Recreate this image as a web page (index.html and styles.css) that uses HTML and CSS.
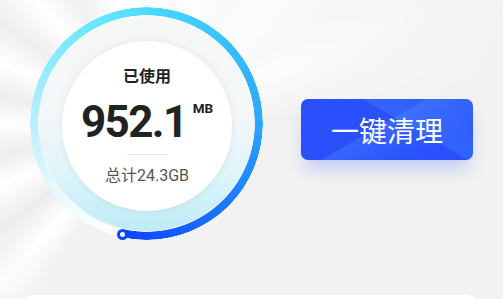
FILE: index.html
```html
<!DOCTYPE html>
<html lang="zh">
<head>
<meta charset="utf-8">
<link rel="stylesheet" href="styles.css">
</head>
<body>
<div class="page">
  <div class="rays"></div>
  <div class="top">
    <div class="gauge">
      <div class="ring"></div>
      <div class="glow"></div>
      <div class="face">
        <div class="label">已使用</div>
        <div class="value"><span class="num">952.1</span><span class="unit">MB</span></div>
        <div class="divider"></div>
        <div class="total">总计24.3GB</div>
      </div>
      <div class="dot"></div>
    </div>
    <button class="clean">一键清理</button>
  </div>
  <div class="card"></div>
</div>
</body>
</html>
```
FILE: styles.css
```css
html, body {
  margin: 0;
  padding: 0;
}
body {
  width: 503px;
  height: 299px;
  overflow: hidden;
  font-family: Roboto, "Noto Sans CJK SC", sans-serif;
}
.page {
  position: relative;
  width: 503px;
  height: 299px;
  background: #f2f2f2;
  overflow: hidden;
}
.rays {
  position: absolute;
  left: -354px;
  top: -376px;
  width: 1000px;
  height: 1000px;
  background: conic-gradient(from 0deg,
    rgba(255,255,255,0.85) 0deg, rgba(255,255,255,0.6) 12deg,
    rgba(255,255,255,0.85) 22deg, rgba(255,255,255,0.55) 34deg,
    rgba(255,255,255,0.8) 46deg, rgba(255,255,255,0.5) 58deg,
    rgba(255,255,255,0.75) 68deg, rgba(255,255,255,0.3) 80deg,
    rgba(255,255,255,0.0) 88deg,
    rgba(255,255,255,0.0) 212deg,
    rgba(255,255,255,0.95) 222deg, rgba(232,232,232,0.5) 234deg,
    rgba(255,255,255,0.95) 247deg, rgba(232,232,232,0.5) 258deg,
    rgba(255,255,255,0.95) 270deg, rgba(232,232,232,0.5) 281deg,
    rgba(255,255,255,0.95) 293deg, rgba(235,235,235,0.5) 305deg,
    rgba(255,255,255,0.95) 318deg, rgba(240,240,240,0.5) 331deg,
    rgba(255,255,255,0.9) 346deg, rgba(255,255,255,0.85) 360deg);
  -webkit-mask: radial-gradient(circle at 50% 50%, #000 0, #000 150px, transparent 400px);
  mask: radial-gradient(circle at 50% 50%, #000 0, #000 150px, transparent 400px);
}
.top {
  position: relative;
  display: flex;
  align-items: flex-start;
  padding: 7px 0 0 30px;
}
.gauge {
  position: relative;
  width: 233px;
  height: 233px;
  flex: none;
}
.ring {
  position: absolute;
  inset: 0;
  border-radius: 50%;
  background: conic-gradient(from 192deg,
    #ffffff 0deg, #e8faff 40deg, #b8f0ff 78deg, #5ee4ff 150deg,
    #46d6ff 175deg, #2aa6ff 258deg, #1768ff 320deg, #0a44ff 360deg);
  -webkit-mask: radial-gradient(circle, transparent 108px, #000 108.6px, #000 116px, transparent 116.6px);
  mask: radial-gradient(circle, transparent 108px, #000 108.6px, #000 116px, transparent 116.6px);
}
.glow {
  position: absolute;
  inset: 9px;
  border-radius: 50%;
  background: linear-gradient(180deg, #f6f7f7 0%, #f4f7f8 45%, #e0f5fa 72%, #bdecf7 100%);
}
.face {
  position: absolute;
  left: 32px;
  top: 34px;
  width: 170px;
  height: 170px;
  border-radius: 50%;
  background: #fff;
  box-shadow: 0 0 8px rgba(0,0,0,0.07);
  display: flex;
  flex-direction: column;
  align-items: center;
}
.label {
  margin-top: 26px;
  font-size: 16px;
  font-weight: 700;
  line-height: 20px;
  color: #222;
}
.value {
  display: flex;
  align-items: flex-start;
  margin-top: 15px;
  color: #222;
}
.num {
  font-size: 44px;
  font-weight: 700;
  line-height: 40px;
  letter-spacing: -1.6px;
}
.unit {
  font-size: 13.5px;
  font-weight: 700;
  line-height: 12px;
  margin-left: 6px;
  margin-top: 0;
}
.divider {
  width: 41px;
  height: 1px;
  background: #e6e6e6;
  margin-top: 12px;
}
.total {
  margin-top: 11px;
  font-size: 16px;
  line-height: 20px;
  color: #555;
}
.dot {
  position: absolute;
  left: 87px;
  top: 222px;
  width: 5px;
  height: 5px;
  border-radius: 50%;
  background: #fff;
  border: 3px solid #0a46ff;
}
.clean {
  margin: 92px 0 0 38px;
  width: 172px;
  height: 61px;
  border: none;
  border-radius: 7px;
  background:
    linear-gradient(150deg, rgba(255,255,255,0) 0%, rgba(255,255,255,0) 45%, rgba(80,140,255,0.35) 45.5%, rgba(80,140,255,0) 80%),
    linear-gradient(30deg, rgba(255,255,255,0) 60%, rgba(60,120,255,0.5) 60.5%, rgba(60,120,255,0.2) 100%),
    #2950fb;
  box-shadow: 0 12px 18px -4px rgba(40,80,251,0.25);
  color: #fff;
  font-family: "Noto Sans CJK SC", sans-serif;
  font-size: 28px;
  font-weight: 400;
  letter-spacing: 0;
  padding: 0;
}
.card {
  position: absolute;
  left: 22px;
  top: 295px;
  width: 456px;
  height: 40px;
  border-radius: 10px;
  background: #fff;
}
```
